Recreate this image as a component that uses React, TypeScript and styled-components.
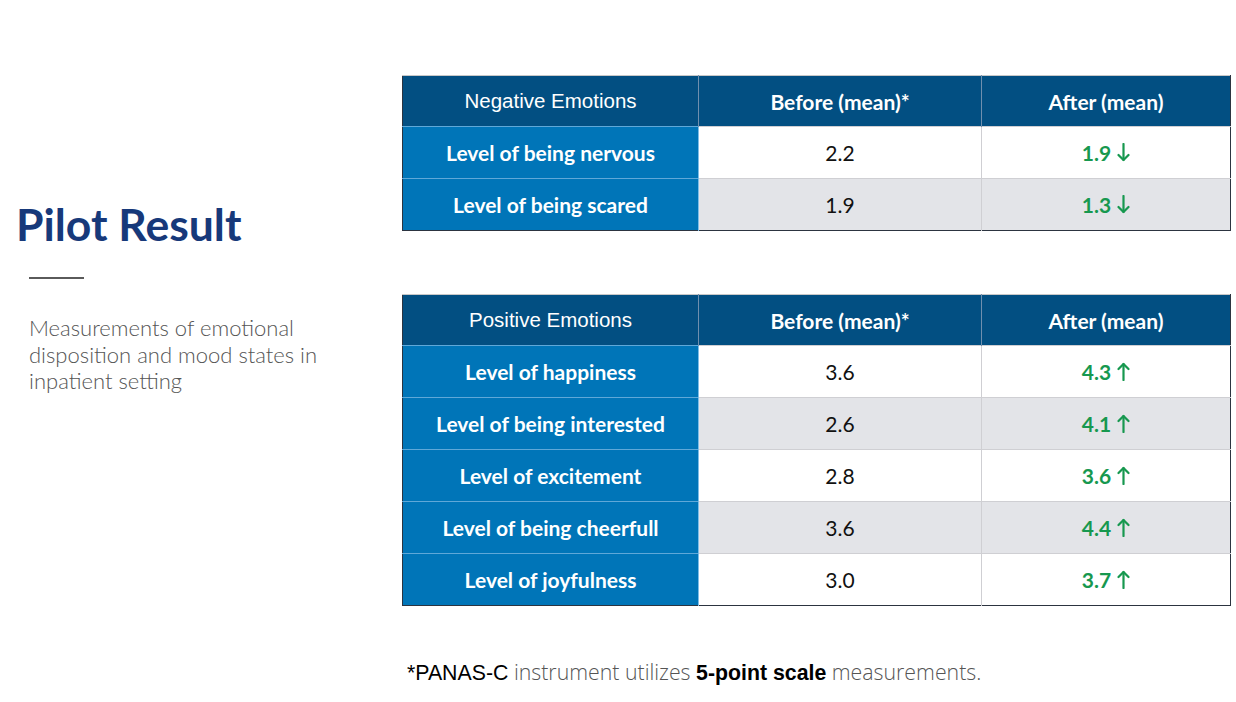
import React from "react";
import styled, { createGlobalStyle } from "styled-components";

const Global = createGlobalStyle`
  html, body { margin: 0; padding: 0; background: #ffffff; }
  #root { width: 1236px; height: 702px; overflow: hidden; }
`;

const Page = styled.div`
  width: 1236px;
  height: 702px;
  display: grid;
  grid-template-columns: 402px 828px;
  background: #fff;
  font-family: Lato, "Liberation Sans", sans-serif;
`;

const Side = styled.aside`
  display: flex;
  flex-direction: column;
  padding: 197px 0 0 16px;
`;

const Title = styled.h1`
  margin: 0;
  font-family: Lato, sans-serif;
  font-weight: 700;
  font-size: 44.5px;
  line-height: 54px;
  color: #17397a;
`;

const Rule = styled.div`
  width: 55px;
  height: 2px;
  background: #5a5a5a;
  margin: 26px 0 0 13px;
`;

const Desc = styled.p`
  margin: 36px 0 0 13px;
  font-family: Lato, sans-serif;
  font-weight: 300;
  font-size: 22px;
  line-height: 26.5px;
  color: #555;
  width: 330px;
`;

const Main = styled.main`
  display: flex;
  flex-direction: column;
  padding-top: 75px;
`;

const Table = styled.table<{ $gapTop?: number }>`
  border-collapse: collapse;
  width: 828px;
  table-layout: fixed;
  margin-top: ${(p) => p.$gapTop ?? 0}px;
  border-top: 1px solid #c8c8c8;
  border-left: 1px solid #2c3440;
  border-right: 1px solid #2c3440;
  border-bottom: 1px solid #2c3440;
`;

const HeadCell = styled.th<{ $plain?: boolean }>`
  height: 50px;
  padding: 0;
  background: #024f82;
  color: #fff;
  text-align: center;
  font-family: ${(p) => (p.$plain ? '"Liberation Sans", Arial, sans-serif' : "Lato, sans-serif")};
  font-weight: ${(p) => (p.$plain ? 400 : 700)};
  font-size: ${(p) => (p.$plain ? "20.5px" : "21px")};
  border-left: 1px solid #6f8fae;
  &:first-child { border-left: none; }
`;

const Row = styled.tr<{ $shade: boolean }>`
  & > td { background: ${(p) => (p.$shade ? "#e3e4e8" : "#ffffff")}; }
  & > td:first-child { background: #0075b8; }
`;

const LabelCell = styled.td`
  height: 51px;
  padding: 0;
  text-align: center;
  color: #fff;
  font-family: Lato, sans-serif;
  font-weight: 700;
  font-size: 21px;
  border-top: 1px solid #5fa8d8;
  border-right: 1px solid #7fbde6;
`;

const ValueCell = styled.td`
  height: 51px;
  padding: 0;
  text-align: center;
  color: #111;
  font-family: Lato, sans-serif;
  font-weight: 400;
  font-size: 21px;
  border-top: 1px solid #cfcfd3;
  border-left: 1px solid #cfcfd3;
`;

const AfterCell = styled(ValueCell)`
  color: #17984f;
  font-weight: 700;
`;

const Trend = styled.span`
  display: inline-flex;
  align-items: center;
  gap: 6px;
`;

const Footer = styled.p`
  margin: 53px 0 0 5px;
  font-size: 21.3px;
  line-height: 26px;
  color: #555;
  font-family: "Open Sans", sans-serif;
  font-weight: 300;
`;

const Strong = styled.span<{ $bold?: boolean }>`
  font-family: "Liberation Sans", Arial, sans-serif;
  font-weight: ${(p) => (p.$bold ? 700 : 400)};
  color: #000;
`;

const Arrow = ({ up }: { up: boolean }) => (
  <svg width="13" height="19" viewBox="0 0 13 19" fill="none" stroke="#17984f" strokeWidth="2.2" strokeLinecap="round" strokeLinejoin="round">
    {up ? (
      <>
        <path d="M6.5 18V2" />
        <path d="M1.5 7L6.5 2l5 5" />
      </>
    ) : (
      <>
        <path d="M6.5 1v16" />
        <path d="M1.5 12l5 5 5-5" />
      </>
    )}
  </svg>
);

type Item = { label: string; before: string; after: string };

const negative: Item[] = [
  { label: "Level of being nervous", before: "2.2", after: "1.9" },
  { label: "Level of being scared", before: "1.9", after: "1.3" },
];

const positive: Item[] = [
  { label: "Level of happiness", before: "3.6", after: "4.3" },
  { label: "Level of being interested", before: "2.6", after: "4.1" },
  { label: "Level of excitement", before: "2.8", after: "3.6" },
  { label: "Level of being cheerfull", before: "3.6", after: "4.4" },
  { label: "Level of joyfulness", before: "3.0", after: "3.7" },
];

const EmotionTable = ({ title, items, up, gapTop }: { title: string; items: Item[]; up: boolean; gapTop?: number }) => (
  <Table $gapTop={gapTop}>
    <colgroup>
      <col style={{ width: 296 }} />
      <col style={{ width: 283 }} />
      <col style={{ width: 249 }} />
    </colgroup>
    <thead>
      <tr>
        <HeadCell $plain>{title}</HeadCell>
        <HeadCell>Before (mean)*</HeadCell>
        <HeadCell>After (mean)</HeadCell>
      </tr>
    </thead>
    <tbody>
      {items.map((it, i) => (
        <Row key={it.label} $shade={i % 2 === 1}>
          <LabelCell>{it.label}</LabelCell>
          <ValueCell>{it.before}</ValueCell>
          <AfterCell>
            <Trend>
              {it.after}
              <Arrow up={up} />
            </Trend>
          </AfterCell>
        </Row>
      ))}
    </tbody>
  </Table>
);

export default function App() {
  return (
    <>
      <Global />
      <Page>
        <Side>
          <Title>Pilot Result</Title>
          <Rule />
          <Desc>Measurements of emotional disposition and mood states in inpatient setting</Desc>
        </Side>
        <Main>
          <EmotionTable title="Negative Emotions" items={negative} up={false} />
          <EmotionTable title="Positive Emotions" items={positive} up gapTop={63} />
          <Footer>
            <Strong>*PANAS-C</Strong> instrument utilizes <Strong $bold>5-point scale</Strong> measurements.
          </Footer>
        </Main>
      </Page>
    </>
  );
}
